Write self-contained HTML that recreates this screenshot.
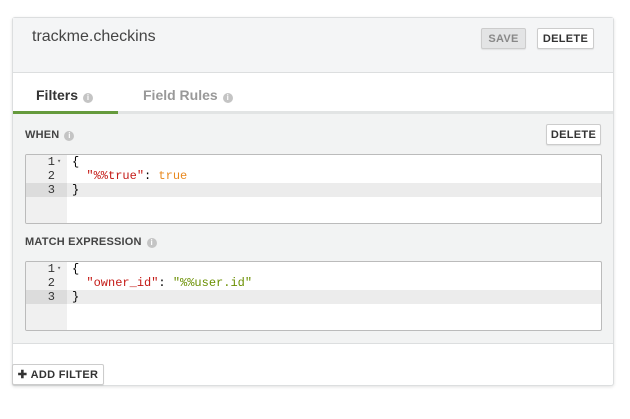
<!DOCTYPE html><html><head><style>
body{margin:0;width:630px;height:419px;background:#fff;font-family:"Liberation Sans",sans-serif;position:relative;overflow:hidden}
.a{position:absolute}
.card{left:12px;top:17px;width:602px;height:369px;border:1px solid #dcdedf;border-radius:3px;box-shadow:0 1px 3px rgba(0,0,0,.12);box-sizing:border-box;background:#fff}
.btn{border:1px solid #ccc;border-radius:2px;background:#fff;font-size:11px;font-weight:bold;color:#333;display:flex;align-items:center;justify-content:center;box-sizing:border-box;letter-spacing:.3px;box-shadow:0 1px 1px rgba(0,0,0,.08)}
.i{display:inline-block;width:10px;height:10px;border-radius:50%;background:#c4c4c4;color:#fff;font-size:8px;line-height:10px;text-align:center;font-weight:bold;vertical-align:0px;margin-left:5px}
.lbl{font-size:11px;font-weight:bold;color:#444;letter-spacing:.2px}
.ed{left:25px;width:577px;height:70px;border:1px solid #bbb;border-radius:2px;background:#fff;box-sizing:border-box;overflow:hidden;font-family:"Liberation Mono",monospace;font-size:12px}
.gut{position:absolute;left:0;top:0;width:41px;height:100%;background:#f0f0f0}
.ln{position:absolute;left:0;height:14px;line-height:14px;width:100%}
.n{position:absolute;width:29px;text-align:right;color:#333}
.c{position:absolute;left:46px}
</style></head><body>
<div class="a card"></div>
<div class="a" style="left:13px;top:18px;width:600px;height:54px;background:#f4f5f6;border-bottom:1px solid #dcdedf"></div>
<div class="a" style="left:32px;top:28px;font-size:16px;color:#444">trackme.checkins</div>
<div class="a btn" style="left:481px;top:28px;width:45px;height:21px;background:#e3e4e5;color:#888">SAVE</div>
<div class="a btn" style="left:537px;top:28px;width:57px;height:21px">DELETE</div>
<div class="a" style="left:36px;top:87px;font-size:14px;font-weight:bold;color:#333">Filters<span class="i">i</span></div>
<div class="a" style="left:143px;top:87px;font-size:14px;font-weight:bold;color:#999">Field Rules<span class="i">i</span></div>
<div class="a" style="left:13px;top:111px;width:600px;height:3px;background:#e2e4e4"></div>
<div class="a" style="left:13px;top:111px;width:105px;height:3px;background:#659a3c"></div>
<div class="a" style="left:13px;top:114px;width:600px;height:229px;background:#f2f3f3;border-bottom:1px solid #dcdedf"></div>
<div class="a lbl" style="left:25px;top:129px">WHEN<span class="i">i</span></div>
<div class="a btn" style="left:546px;top:124px;width:55px;height:21px">DELETE</div>
<div class="a ed" style="top:154px"><div class="gut"></div>
<div class="ln" style="top:0"><span class="n">1</span><span style="position:absolute;left:31px;font-size:7px;color:#666">▾</span><span class="c">{</span></div>
<div class="ln" style="top:14px"><span class="n">2</span><span class="c">&nbsp;&nbsp;<span style="color:#c41a16">"%%true"</span>: <span style="color:#e8881e">true</span></span></div>
<div class="ln" style="top:28px;background:#ececec"><span style="position:absolute;left:0;width:41px;height:14px;background:#dcdcdc"></span><span class="n">3</span><span class="c">}</span></div></div>
<div class="a lbl" style="left:25px;top:236px">MATCH EXPRESSION<span class="i">i</span></div>
<div class="a ed" style="top:261px"><div class="gut"></div>
<div class="ln" style="top:0"><span class="n">1</span><span style="position:absolute;left:31px;font-size:7px;color:#666">▾</span><span class="c">{</span></div>
<div class="ln" style="top:14px"><span class="n">2</span><span class="c">&nbsp;&nbsp;<span style="color:#c41a16">"owner_id"</span>: <span style="color:#6a8f00">"%%user.id"</span></span></div>
<div class="ln" style="top:28px;background:#ececec"><span style="position:absolute;left:0;width:41px;height:14px;background:#dcdcdc"></span><span class="n">3</span><span class="c">}</span></div></div>
<div class="a btn" style="left:12px;top:364px;width:92px;height:21px">✚&nbsp;ADD FILTER</div>
</body></html>
